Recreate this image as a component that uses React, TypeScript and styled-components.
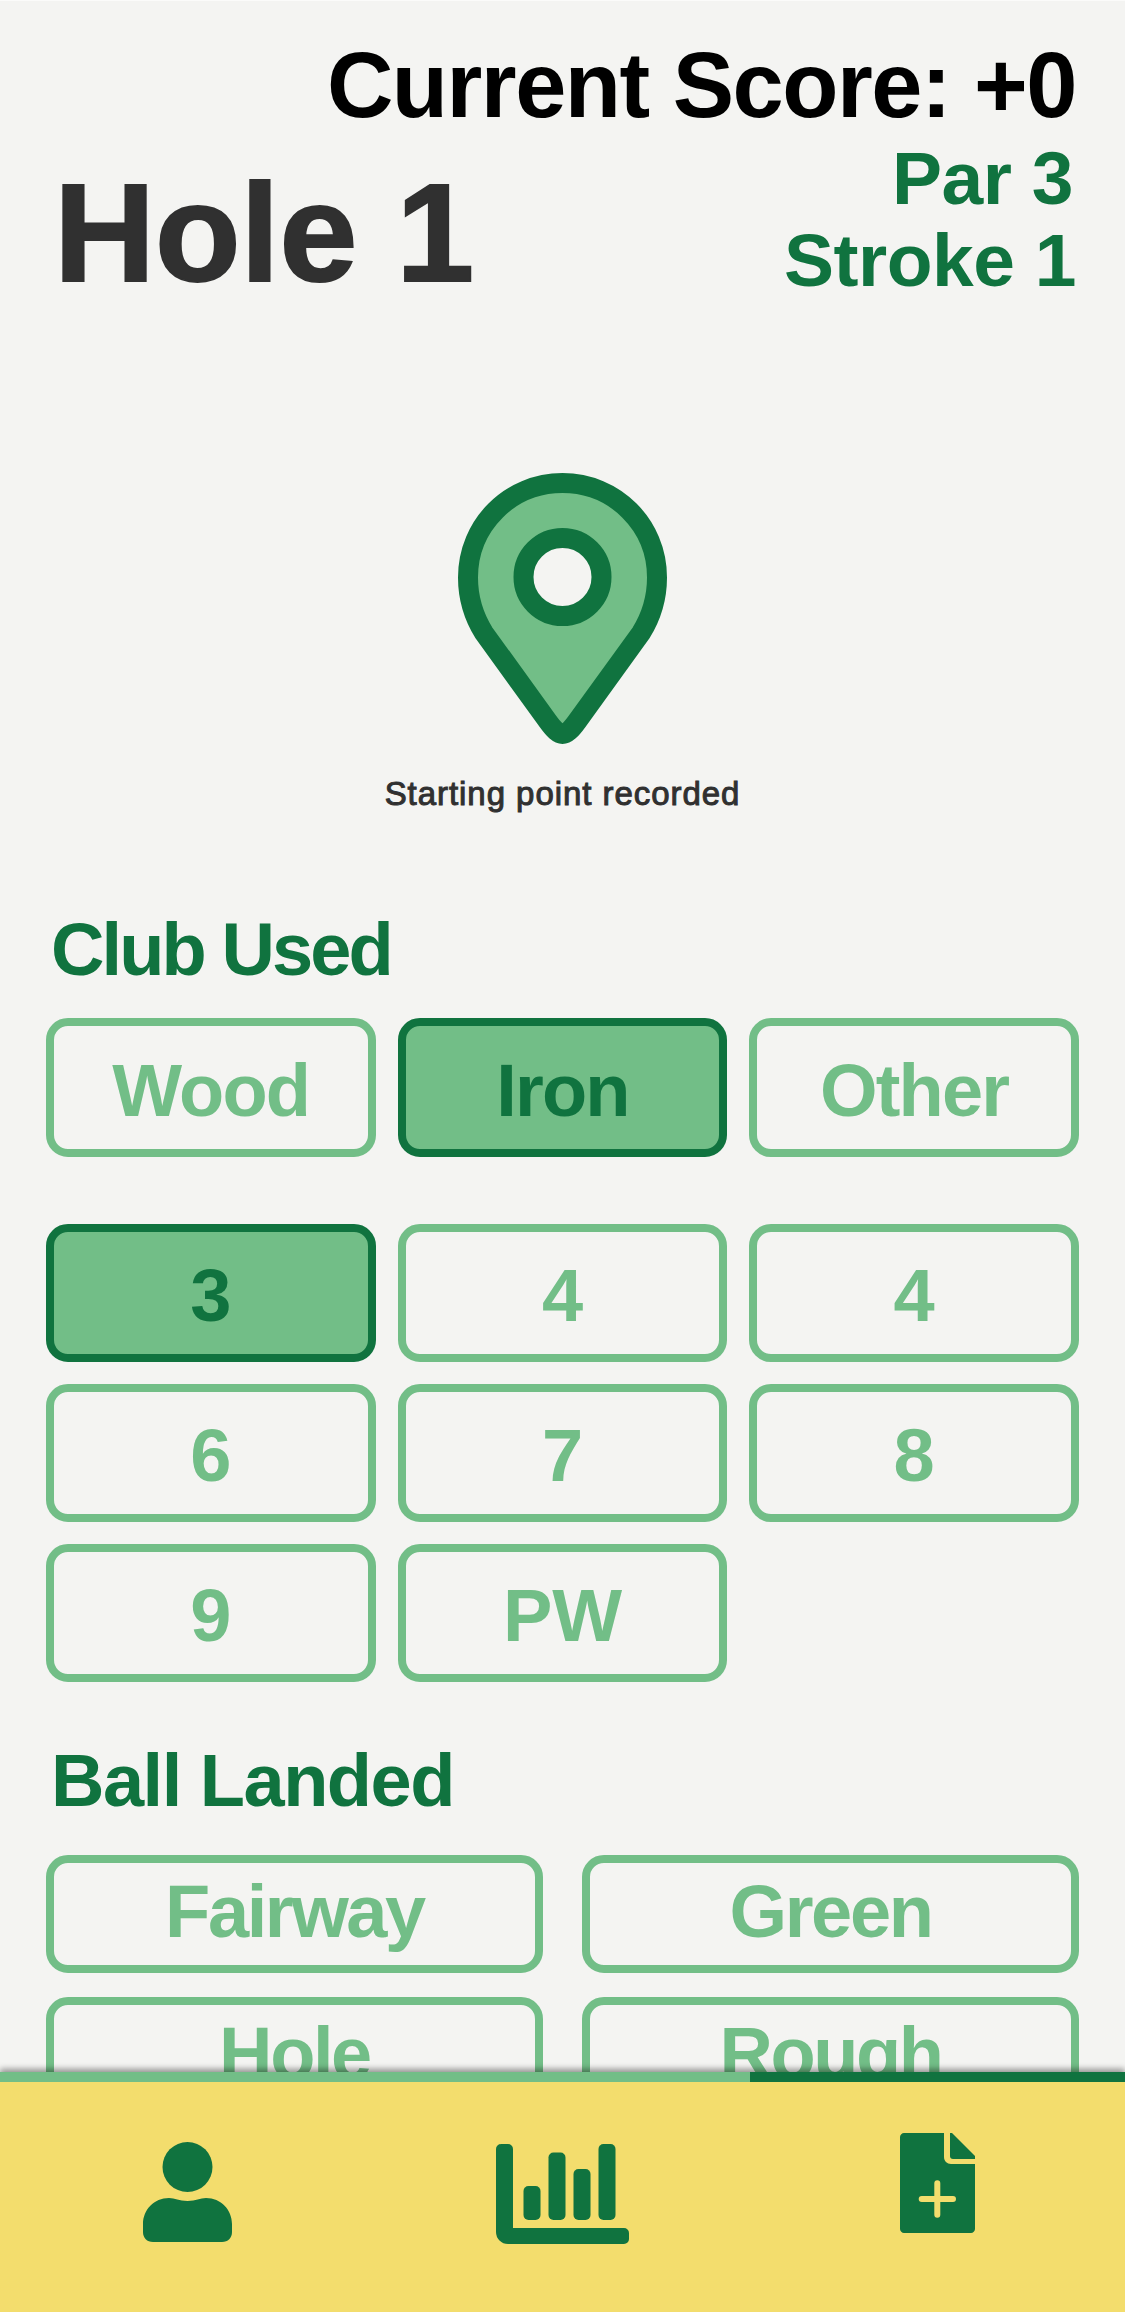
import styled, { createGlobalStyle } from "styled-components";

const DARK = "#10733f";
const LIGHT = "#72be87";
const PAPER = "#f4f4f2";
const YELLOW = "#f3dd6d";

const GlobalStyle = createGlobalStyle`
  html, body {
    margin: 0;
    padding: 0;
    height: 100%;
    overflow: hidden;
    background: ${PAPER};
  }
  * {
    box-sizing: border-box;
  }
`;

const Page = styled.div`
  height: 100vh;
  overflow: hidden;
  border-top: 1px solid #fbfbfa;
  padding: 34px 46px 0;
  font-family: "Liberation Sans", Arial, sans-serif;
  background: ${PAPER};
`;

const Score = styled.div`
  font-size: 92px;
  line-height: 100px;
  font-weight: 700;
  letter-spacing: -1.5px;
  color: #000;
  text-align: right;
  padding-right: 3px;
`;

const TitleRow = styled.div`
  display: flex;
  justify-content: space-between;
  align-items: flex-end;
  margin-top: 2px;
  padding-left: 8px;
`;

const HoleTitle = styled.h1`
  margin: 0;
  font-size: 140px;
  line-height: 136px;
  font-weight: 700;
  -webkit-text-stroke: 2px #303030;
  color: #303030;
`;

const HoleInfo = styled.div`
  text-align: right;
  color: ${DARK};
  font-size: 75px;
  line-height: 82px;
  font-weight: 700;
  letter-spacing: -0.5px;
`;

const InfoLine = styled.div<{ $inset: number }>`
  padding-right: ${(p) => p.$inset}px;
`;

const PinBox = styled.div`
  display: flex;
  flex-direction: column;
  align-items: center;
  margin-top: 172px;
`;

const PinCaption = styled.div`
  margin-top: 30px;
  font-size: 33px;
  line-height: 40px;
  font-weight: 400;
  letter-spacing: 0.95px;
  -webkit-text-stroke: 1px #303030;
  color: #303030;
`;

const SectionTitle = styled.h2<{ $top: number; $tracking: number }>`
  margin: ${(p) => p.$top}px 0 0 5px;
  font-size: 74px;
  line-height: 80px;
  font-weight: 700;
  letter-spacing: ${(p) => p.$tracking}px;
  color: ${DARK};
`;

const ButtonGrid = styled.div<{ $cols: number; $top: number; $gapX: number; $gapY: number }>`
  display: grid;
  grid-template-columns: repeat(${(p) => p.$cols}, 1fr);
  column-gap: ${(p) => p.$gapX}px;
  row-gap: ${(p) => p.$gapY}px;
  margin-top: ${(p) => p.$top}px;
`;

const ChoiceButton = styled.button<{
  $active?: boolean;
  $height: number;
  $pushDown?: number;
  $pushUp?: number;
  $tracking?: number;
}>`
  height: ${(p) => p.$height}px;
  border: 8px solid ${(p) => (p.$active ? DARK : LIGHT)};
  border-radius: 22px;
  background: ${(p) => (p.$active ? LIGHT : "transparent")};
  color: ${(p) => (p.$active ? DARK : LIGHT)};
  font-family: inherit;
  font-size: 74px;
  line-height: 80px;
  font-weight: 700;
  letter-spacing: ${(p) => p.$tracking ?? 0}px;
  padding: ${(p) => p.$pushDown ?? 0}px 0 ${(p) => p.$pushUp ?? 0}px;
`;

const BottomNav = styled.nav`
  position: fixed;
  left: 0;
  right: 0;
  bottom: 0;
  height: 240px;
  background: ${YELLOW};
  box-shadow: 0 -3px 6px rgba(0, 0, 0, 0.4);
`;

const ProgressTrack = styled.div`
  height: 10px;
  background: ${DARK};
`;

const ProgressFill = styled.div`
  height: 100%;
  background: ${LIGHT};
`;

const NavRow = styled.div`
  display: grid;
  grid-template-columns: repeat(3, 1fr);
  padding-top: 60px;
`;

const NavItem = styled.div<{ $shift: number }>`
  display: flex;
  justify-content: center;
  margin-top: ${(p) => p.$shift}px;
  svg {
    display: block;
  }
`;

const PinIcon = () => (
  <svg width="209" height="271" viewBox="0 0 209 271">
    <path
      d="M104.5 10C52 10 10 52 10 104.5C10 125 16 144 26 160L90 248.5C102 265 107 265 119 248.5L183 160C193 144 199 125 199 104.5C199 52 157 10 104.5 10Z"
      fill={LIGHT}
      stroke={DARK}
      strokeWidth="20"
      strokeLinejoin="round"
    />
    <circle cx="104.5" cy="104" r="39" fill={PAPER} stroke={DARK} strokeWidth="20" />
  </svg>
);

const PersonIcon = () => (
  <svg width="89" height="100" viewBox="0 0 89 100" fill={DARK}>
    <circle cx="44.5" cy="25" r="25" />
    <path d="M0 82C0 68 11 56 26 56C32 56 36 59 44.5 59C53 59 57 56 63 56C78 56 89 68 89 82V90C89 96 85 100 79 100H10C4 100 0 96 0 90Z" />
  </svg>
);

const ChartIcon = () => (
  <svg width="134" height="100" viewBox="0 0 134 100" fill={DARK}>
    <path d="M5 0H12A5 5 0 0 1 17 5V84H128A5 5 0 0 1 133 89V95A5 5 0 0 1 128 100H12A12 12 0 0 1 0 88V5A5 5 0 0 1 5 0Z" />
    <rect x="27.5" y="42" width="17" height="34" rx="5" />
    <rect x="52.5" y="8.5" width="17" height="67.5" rx="5" />
    <rect x="77.5" y="25" width="17" height="51" rx="5" />
    <rect x="102.5" y="0" width="17" height="76" rx="5" />
  </svg>
);

const NewDocIcon = () => (
  <svg width="75" height="100" viewBox="0 0 75 100">
    <path
      d="M4 0H44V24C44 28 47 31 51 31H75V96C75 98 73 100 71 100H4C2 100 0 98 0 96V4C0 2 2 0 4 0Z"
      fill={DARK}
    />
    <path d="M50 0H52L75 23V26H53C51 26 50 25 50 23Z" fill={DARK} />
    <path d="M37.3 50.3V81.7M21.7 66H53" stroke={YELLOW} strokeWidth="6" strokeLinecap="round" />
  </svg>
);

const clubTypes = ["Wood", "Iron", "Other"];
const clubNumbers = ["3", "4", "4", "6", "7", "8", "9", "PW"];
const landings = ["Fairway", "Green", "Hole", "Rough"];
const progress = (750 / 1125) * 100;

export default function App() {
  return (
    <Page>
      <GlobalStyle />
      <Score>Current Score: +0</Score>
      <TitleRow>
        <HoleTitle>Hole 1</HoleTitle>
        <HoleInfo>
          <InfoLine $inset={6}>Par 3</InfoLine>
          <InfoLine $inset={3}>Stroke 1</InfoLine>
        </HoleInfo>
      </TitleRow>

      <PinBox>
        <PinIcon />
        <PinCaption>Starting point recorded</PinCaption>
      </PinBox>

      <SectionTitle $top={96} $tracking={-2.9}>
        Club Used
      </SectionTitle>
      <ButtonGrid $cols={3} $top={28} $gapX={22} $gapY={22}>
        {clubTypes.map((name) => (
          <ChoiceButton key={name} $height={139} $active={name === "Iron"} $pushDown={6} $tracking={-1.8}>
            {name}
          </ChoiceButton>
        ))}
      </ButtonGrid>
      <ButtonGrid $cols={3} $top={67} $gapX={22} $gapY={22}>
        {clubNumbers.map((num, i) => (
          <ChoiceButton key={i} $height={138} $active={i === 0} $pushDown={5}>
            {num}
          </ChoiceButton>
        ))}
      </ButtonGrid>

      <SectionTitle $top={59} $tracking={-1.5}>
        Ball Landed
      </SectionTitle>
      <ButtonGrid $cols={2} $top={34} $gapX={39} $gapY={24}>
        {landings.map((name) => (
          <ChoiceButton key={name} $height={118} $pushUp={5} $tracking={-2.4}>
            {name}
          </ChoiceButton>
        ))}
      </ButtonGrid>

      <BottomNav>
        <ProgressTrack>
          <ProgressFill style={{ width: `${progress}%` }} />
        </ProgressTrack>
        <NavRow>
          <NavItem $shift={0}>
            <PersonIcon />
          </NavItem>
          <NavItem $shift={2}>
            <ChartIcon />
          </NavItem>
          <NavItem $shift={-9}>
            <NewDocIcon />
          </NavItem>
        </NavRow>
      </BottomNav>
    </Page>
  );
}
